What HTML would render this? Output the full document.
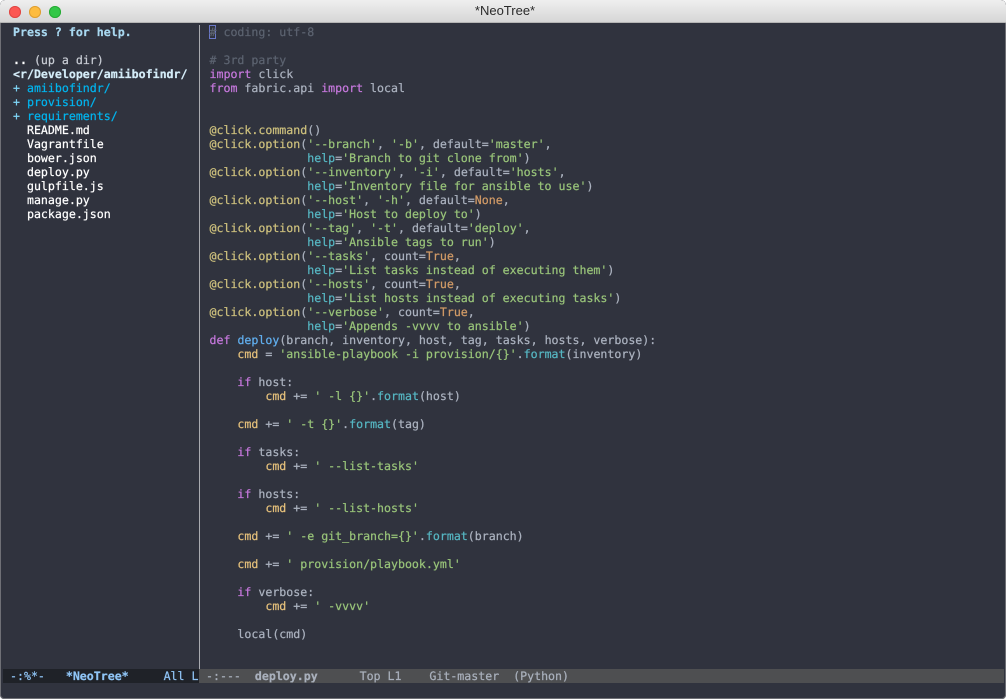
<!DOCTYPE html>
<html><head><meta charset="utf-8">
<style>
html,body{margin:0;padding:0;width:1006px;height:699px;overflow:hidden;background:#fff}
#win{position:absolute;left:0;top:0;width:1006px;height:699px;background:#30333e;border-radius:5px 5px 4px 4px;overflow:hidden;box-shadow:inset 0 0 0 1px #6f7076}
#title{position:absolute;left:0;top:0;width:1002px;padding-left:4px;height:22px;background:linear-gradient(#efefef,#d6d6d6);border-bottom:1px solid #b5b5b5;border-radius:5px 5px 0 0;font:13px/22px "Liberation Sans",sans-serif;color:#2b2b2b;text-align:center}
.dot{position:absolute;top:6px;width:12px;height:12px;border-radius:50%}
pre{position:absolute;margin:0;font-family:"DejaVu Sans Mono","Liberation Mono",monospace;font-size:11.6px;line-height:14px;white-space:pre;color:#abb2bf;text-rendering:geometricPrecision;-webkit-text-stroke:0.22px currentColor}
#side{left:13px;top:25px}
#code{left:209.5px;top:25px}
#div{position:absolute;left:199px;top:25px;width:1px;height:644px;background:#a9abb0}
#ml{position:absolute;left:3px;top:669px;width:196px;height:14px;background:#1f2228;overflow:hidden}
#mr{position:absolute;left:199px;top:669px;width:805px;height:14px;background:#4e4f51}
#cur{position:absolute;left:209px;top:25px;width:7px;height:14px;box-sizing:border-box;border:1px solid #6a78c8}
.h{color:#a8d8f0;font-weight:bold}
.w{color:#fff}.wb{color:#fff;font-weight:bold}
.d{color:#00b4ee}
.p{color:#7fd4f5}
.c{color:#5c6370}
.k{color:#c678dd}
.s{color:#98c379}
.a{color:#cdc07d}
.f{color:#61afef}
.t{color:#56b6c2}
.n{color:#d19a66}
.v{color:#e5c07b}
</style></head><body>
<div id="win">
<div id="title">*NeoTree*</div>
<div class="dot" style="left:9px;background:#fc5753;box-shadow:inset 0 0 0 1px #df4744"></div>
<div class="dot" style="left:29px;background:#fdbc40;box-shadow:inset 0 0 0 1px #de9f34"></div>
<div class="dot" style="left:49px;background:#33c748;box-shadow:inset 0 0 0 1px #27aa35"></div>
<pre id="side"><span class="h">Press ? for help.</span>

<span class="w"><b>..</b></span> <span style="color:#c8ccd4">(up a dir)</span>
<span class="wb" style="color:#d4ecf8">&lt;r/Developer/amiibofindr/</span>
<span class="p">+ </span><span class="d">amiibofindr/</span>
<span class="p">+ </span><span class="d">provision/</span>
<span class="p">+ </span><span class="d">requirements/</span>
<span class="w">  README.md
  Vagrantfile
  bower.json
  deploy.py
  gulpfile.js
  manage.py
  package.json</span></pre>
<div id="div"></div>
<div id="cur"></div>
<pre id="code"><span class="c"># coding: utf-8</span>

<span class="c"># 3rd party</span>
<span class="k">import</span> click
<span class="k">from</span> fabric.api <span class="k">import</span> local


<span class="a">@click.command</span>()
<span class="a">@click.option</span>(<span class="s">'--branch'</span>, <span class="s">'-b'</span>, default=<span class="s">'master'</span>,
              <span class="t">help</span>=<span class="s">'Branch to git clone from'</span>)
<span class="a">@click.option</span>(<span class="s">'--inventory'</span>, <span class="s">'-i'</span>, default=<span class="s">'hosts'</span>,
              <span class="t">help</span>=<span class="s">'Inventory file for ansible to use'</span>)
<span class="a">@click.option</span>(<span class="s">'--host'</span>, <span class="s">'-h'</span>, default=<span class="n">None</span>,
              <span class="t">help</span>=<span class="s">'Host to deploy to'</span>)
<span class="a">@click.option</span>(<span class="s">'--tag'</span>, <span class="s">'-t'</span>, default=<span class="s">'deploy'</span>,
              <span class="t">help</span>=<span class="s">'Ansible tags to run'</span>)
<span class="a">@click.option</span>(<span class="s">'--tasks'</span>, count=<span class="n">True</span>,
              <span class="t">help</span>=<span class="s">'List tasks instead of executing them'</span>)
<span class="a">@click.option</span>(<span class="s">'--hosts'</span>, count=<span class="n">True</span>,
              <span class="t">help</span>=<span class="s">'List hosts instead of executing tasks'</span>)
<span class="a">@click.option</span>(<span class="s">'--verbose'</span>, count=<span class="n">True</span>,
              <span class="t">help</span>=<span class="s">'Appends -vvvv to ansible'</span>)
<span class="k">def</span> <span class="f">deploy</span>(branch, inventory, host, tag, tasks, hosts, verbose):
    <span class="v">cmd</span> = <span class="s">'ansible-playbook -i provision/{}'</span>.<span class="t">format</span>(inventory)

    <span class="k">if</span> host:
        <span class="v">cmd</span> += <span class="s">' -l {}'</span>.<span class="t">format</span>(host)

    <span class="v">cmd</span> += <span class="s">' -t {}'</span>.<span class="t">format</span>(tag)

    <span class="k">if</span> tasks:
        <span class="v">cmd</span> += <span class="s">' --list-tasks'</span>

    <span class="k">if</span> hosts:
        <span class="v">cmd</span> += <span class="s">' --list-hosts'</span>

    <span class="v">cmd</span> += <span class="s">' -e git_branch={}'</span>.<span class="t">format</span>(branch)

    <span class="v">cmd</span> += <span class="s">' provision/playbook.yml'</span>

    <span class="k">if</span> verbose:
        <span class="v">cmd</span> += <span class="s">' -vvvv'</span>

    local(cmd)</pre>
<div id="ml"><pre style="left:7px;top:0;color:#8fc4f5"><span>-:%*-   </span><b>*NeoTree*</b>     All L</pre></div>
<div id="mr"><pre style="left:7px;top:0;color:#a9b0bc">-:---  <b>deploy.py</b>      Top L1    Git-master  (Python)</pre></div>
</div>
</body></html>
